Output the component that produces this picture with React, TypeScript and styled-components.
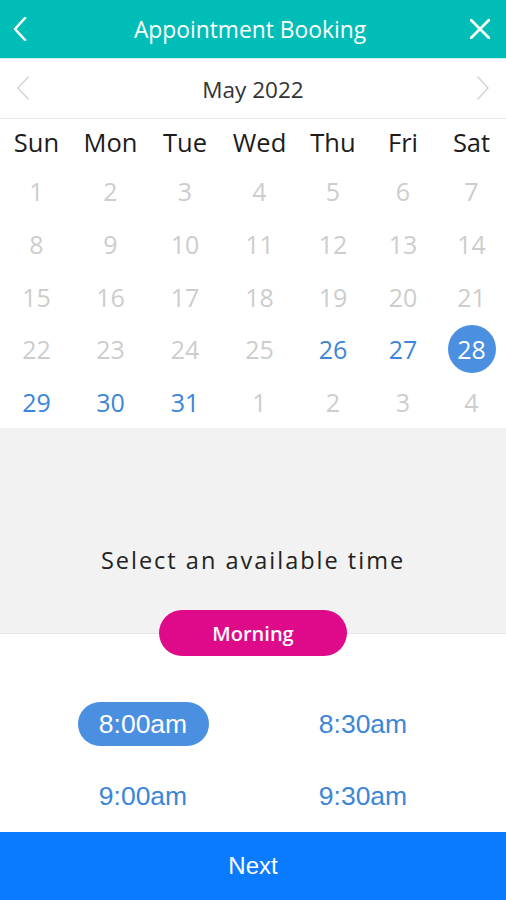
import React from "react";
import styled, { createGlobalStyle } from "styled-components";

const GlobalStyle = createGlobalStyle`
  body {
    margin: 0;
    background: #ffffff;
    font-family: "Open Sans", "Noto Sans", sans-serif;
  }
`;

const Screen = styled.div`
  width: 506px;
  height: 900px;
  display: flex;
  flex-direction: column;
  overflow: hidden;
`;

const Header = styled.div`
  height: 58px;
  background-color: #01bdb7;
  border-bottom: 1px solid #bfeeee;
  display: flex;
  align-items: center;
  justify-content: space-between;
  padding: 0 12px 0 6px;
  box-sizing: content-box;
`;

const HeaderTitle = styled.div`
  color: #ffffff;
  font-size: 22.8px;
  margin-top: 2px;
`;

const IconButton = styled.div`
  width: 28px;
  height: 28px;
  display: flex;
  align-items: center;
  justify-content: center;
`;

const MonthBar = styled.div`
  height: 60px;
  display: flex;
  align-items: center;
  justify-content: space-between;
  padding: 0 16px;
  border-bottom: 1px solid #e8e8e8;
`;

const MonthLabel = styled.div`
  font-size: 22.5px;
  color: #333333;
  margin-top: 2px;
`;

const CalendarGrid = styled.div`
  display: grid;
  grid-template-columns: 73fr 75fr 74fr 75fr 72fr 68fr 69fr;
  grid-template-rows: 46px repeat(5, 52.6px);
`;

const WeekdayCell = styled.div`
  display: flex;
  align-items: center;
  justify-content: center;
  font-size: 25.5px;
  color: #1c1c1c;
`;

const DayCell = styled.div`
  display: flex;
  align-items: center;
  justify-content: center;
`;

const DayNumber = styled.div<{ $state: "off" | "open" | "selected" }>`
  width: 48px;
  height: 48px;
  border-radius: 50%;
  display: flex;
  align-items: center;
  justify-content: center;
  font-size: 25px;
  color: ${(p) =>
    p.$state === "off" ? "#cdcdcd" : p.$state === "open" ? "#3b86d8" : "#ffffff"};
  background-color: ${(p) => (p.$state === "selected" ? "#4a8fe0" : "transparent")};
`;

const TimeIntro = styled.div`
  height: 183px;
  background-color: #f2f2f2;
  display: flex;
  flex-direction: column;
  justify-content: flex-end;
  align-items: center;
  padding-bottom: 35px;
  box-sizing: border-box;
`;

const IntroText = styled.div`
  font-size: 23.5px;
  line-height: 30px;
  letter-spacing: 2px;
  color: #222222;
`;

const PeriodRow = styled.div`
  height: 46px;
  display: flex;
  justify-content: center;
  background: linear-gradient(#f2f2f2 0, #f2f2f2 23px, #e6e6e6 23px, #e6e6e6 24px, #ffffff 24px);
`;

const PeriodPill = styled.div`
  width: 188px;
  height: 46px;
  border-radius: 23px;
  background-color: #de0a8a;
  color: #ffffff;
  font-size: 20px;
  font-weight: 600;
  display: flex;
  align-items: center;
  justify-content: center;
`;

const SlotGrid = styled.div`
  flex: 1;
  width: 440px;
  align-self: center;
  display: grid;
  grid-template-columns: 1fr 1fr;
  grid-auto-rows: 72px;
  padding-top: 32px;
  box-sizing: border-box;
`;

const SlotCell = styled.div`
  display: flex;
  align-items: center;
  justify-content: center;
`;

const Slot = styled.div<{ $active?: boolean }>`
  width: 131px;
  height: 44px;
  border-radius: 22px;
  display: flex;
  align-items: center;
  justify-content: center;
  font-family: "Liberation Sans", Arial, sans-serif;
  font-size: 26.5px;
  color: ${(p) => (p.$active ? "#ffffff" : "#3b86d8")};
  background-color: ${(p) => (p.$active ? "#4a8fe0" : "transparent")};
`;

const NextButton = styled.div`
  height: 68px;
  flex-shrink: 0;
  background-color: #0a7bff;
  color: #ffffff;
  font-family: "Liberation Sans", Arial, sans-serif;
  font-size: 24px;
  display: flex;
  align-items: center;
  justify-content: center;
`;

const weekdays = ["Sun", "Mon", "Tue", "Wed", "Thu", "Fri", "Sat"];

type Day = { n: number; state: "off" | "open" | "selected" };

const days: Day[] = [
  ...Array.from({ length: 25 }, (_, i) => ({ n: i + 1, state: "off" as const })),
  { n: 26, state: "open" },
  { n: 27, state: "open" },
  { n: 28, state: "selected" },
  { n: 29, state: "open" },
  { n: 30, state: "open" },
  { n: 31, state: "open" },
  ...[1, 2, 3, 4].map((n) => ({ n, state: "off" as const })),
];

const slots = ["8:00am", "8:30am", "9:00am", "9:30am"];

const Chevron = ({ dir, color, width }: { dir: "left" | "right"; color: string; width: number }) => (
  <svg width="14" height="24" viewBox="0 0 14 24">
    <polyline
      points={dir === "left" ? "12,1 2,12 12,23" : "2,1 12,12 2,23"}
      fill="none"
      stroke={color}
      strokeWidth={width}
      strokeLinecap="round"
      strokeLinejoin="round"
    />
  </svg>
);

const App = () => {
  return (
    <Screen>
      <GlobalStyle />
      <Header>
        <IconButton>
          <Chevron dir="left" color="#ffffff" width={2.6} />
        </IconButton>
        <HeaderTitle>Appointment Booking</HeaderTitle>
        <IconButton>
          <svg width="20" height="20" viewBox="0 0 20 20">
            <path d="M1 1 L19 19 M19 1 L1 19" stroke="#ffffff" strokeWidth="2.6" strokeLinecap="round" />
          </svg>
        </IconButton>
      </Header>

      <MonthBar>
        <Chevron dir="left" color="#d6d6d6" width={1.6} />
        <MonthLabel>May 2022</MonthLabel>
        <Chevron dir="right" color="#d6d6d6" width={1.6} />
      </MonthBar>

      <CalendarGrid>
        {weekdays.map((d) => (
          <WeekdayCell key={d}>{d}</WeekdayCell>
        ))}
        {days.map((d, i) => (
          <DayCell key={i}>
            <DayNumber $state={d.state}>{d.n}</DayNumber>
          </DayCell>
        ))}
      </CalendarGrid>

      <TimeIntro>
        <IntroText>Select an available time</IntroText>
      </TimeIntro>
      <PeriodRow>
        <PeriodPill>Morning</PeriodPill>
      </PeriodRow>

      <SlotGrid>
        {slots.map((s, i) => (
          <SlotCell key={s}>
            <Slot $active={i === 0}>{s}</Slot>
          </SlotCell>
        ))}
      </SlotGrid>

      <NextButton>Next</NextButton>
    </Screen>
  );
};

export default App;
